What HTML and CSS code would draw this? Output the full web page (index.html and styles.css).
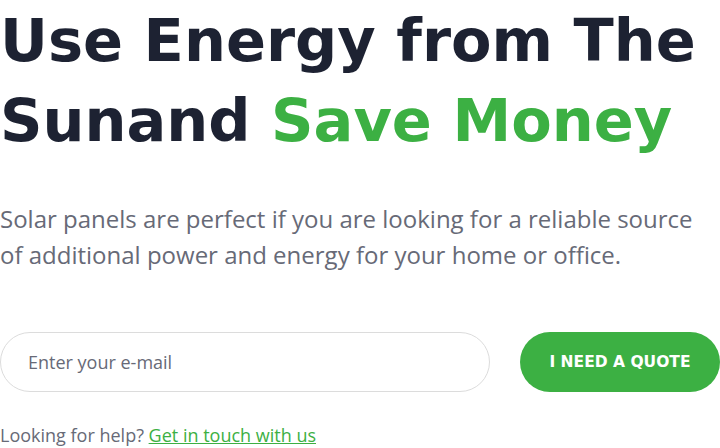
FILE: index.html
```html
<!DOCTYPE html>
<html>
<head>
<meta charset="utf-8">
<link rel="stylesheet" href="styles.css">
</head>
<body>
<section class="hero">
  <h1 class="title">Use Energy from The Sunand <span class="accent">Save Money</span></h1>
  <p class="lead">Solar panels are perfect if you are looking for a reliable source of additional power and energy for your home or office.</p>
  <form class="quote">
    <input class="email" type="text" placeholder="Enter your e-mail">
    <button class="btn" type="button">I NEED A QUOTE</button>
  </form>
  <p class="help">Looking for help? <a class="link" href="#">Get in touch with us</a></p>
</section>
</body>
</html>
```
FILE: styles.css
```css
html, body {
  margin: 0;
  padding: 0;
  background: #ffffff;
}
body {
  width: 720px;
  height: 448px;
  overflow: hidden;
}
.hero {
  display: flex;
  flex-direction: column;
}
.title {
  margin: 0;
  padding-top: 1px;
  font-family: "DejaVu Sans", sans-serif;
  font-weight: 700;
  font-size: 59px;
  line-height: 80px;
  letter-spacing: 0;
  color: #1d2232;
}
.accent {
  color: #3cb043;
}
.lead {
  margin: 40px 0 0;
  font-family: "Open Sans", sans-serif;
  font-size: 24px;
  line-height: 36px;
  color: #676a77;
}
.quote {
  margin-top: 59px;
  display: flex;
  gap: 30px;
}
.email {
  box-sizing: border-box;
  width: 490px;
  height: 60px;
  border: 1px solid #dcdcdc;
  border-radius: 30px;
  padding: 0 27px;
  font-family: "Open Sans", sans-serif;
  font-size: 18px;
  color: #676a77;
  outline: none;
}
.email::placeholder {
  color: #676a77;
}
.btn {
  width: 200px;
  height: 60px;
  border: 0;
  border-radius: 30px;
  background: #3cb043;
  color: #ffffff;
  font-family: "DejaVu Sans", sans-serif;
  font-weight: 700;
  font-size: 15.5px;
  letter-spacing: 0;
}
.help {
  margin: 31px 0 0;
  font-family: "Open Sans", sans-serif;
  font-size: 18px;
  line-height: 24px;
  color: #676a77;
}
.link {
  color: #3cb043;
  text-decoration: underline;
}
```
